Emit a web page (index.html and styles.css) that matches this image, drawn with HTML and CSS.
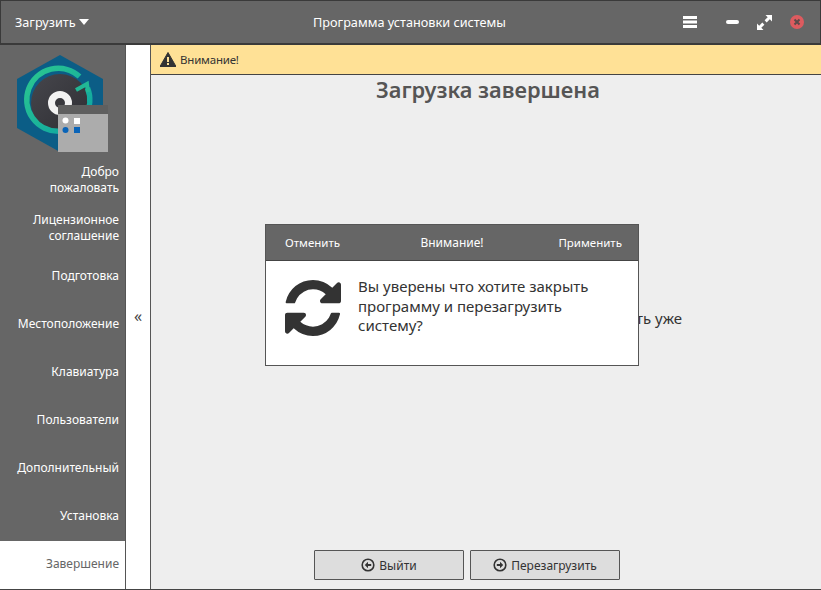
FILE: index.html
```html
<!DOCTYPE html>
<html lang="ru">
<head>
<meta charset="utf-8">
<title>Программа установки системы</title>
<link rel="stylesheet" href="styles.css">
</head>
<body>
<div class="app">
  <header class="titlebar">
    <div class="tb-left">Загрузить <span class="caret"></span></div>
    <div class="tb-title">Программа установки системы</div>
    <div class="tb-right">
      <svg class="ic-menu" width="14" height="12" viewBox="0 0 14 12"><path d="M0 0h14v3H0zM0 4.500h14v3H0zM0 9h14v3H0z" fill="#fff"/></svg>
      <span class="ic-min"></span>
      <svg class="ic-max" width="15" height="15" viewBox="0 0 15 15"><path d="M8.500 0H15v6.500l-2.200-2.200-3.100 3.100-2.100-2.100 3.100-3.100zM6.500 15H0V8.500l2.200 2.200 3.100-3.100 2.100 2.100-3.100 3.100z" fill="#fff"/></svg>
      <svg class="ic-close" width="14" height="14" viewBox="0 0 14 14"><circle cx="7" cy="7" r="7" fill="#dd5b5f"/><path d="M4.500 4.500l5 5M9.500 4.500l-5 5" stroke="#5c4a4a" stroke-width="2"/></svg>
    </div>
  </header>
  <div class="body">
    <aside class="sidebar">
      <svg class="logo" width="92" height="98" viewBox="17 55 92 98">
        <defs>
          <linearGradient id="ring" x1="0" y1="0" x2="1" y2="1"><stop offset="0" stop-color="#2cc78f"/><stop offset="1" stop-color="#0ca3a3"/></linearGradient>
          <linearGradient id="disc" x1="0" y1="0" x2="1" y2="1"><stop offset="0" stop-color="#46464c"/><stop offset="1" stop-color="#2e2e33"/></linearGradient>
        </defs>
        <path d="M60 55l43 24v49l-43 24-43-24V79z" fill="#0b5d86"/>
        <circle cx="60" cy="103" r="29" fill="url(#disc)"/>
        <path d="M79.500 76.500A31.500 31.500 0 1 0 87.500 88" fill="none" stroke="url(#ring)" stroke-width="5.500"/>
        <path d="M76 90l11-6 1 8" fill="none" stroke="#22b795" stroke-width="4"/>
        <circle cx="60" cy="103" r="8.500" fill="#38383d" stroke="#f2f2f2" stroke-width="7"/>
        <rect x="58" y="105" width="50" height="9" fill="#5f5f5f"/>
        <rect x="58" y="114" width="50" height="38" fill="#acacac"/>
        <circle cx="65.500" cy="120.500" r="3" fill="#fff"/>
        <rect x="74" y="118" width="6" height="6" fill="#fff"/>
        <circle cx="65.500" cy="130" r="3" fill="#0a64b8"/>
        <rect x="74" y="127" width="6" height="6" fill="#0a64b8"/>
      </svg>
      <nav class="steps">
        <a class="step">Добро<br>пожаловать</a>
        <a class="step">Лицензионное<br>соглашение</a>
        <a class="step">Подготовка</a>
        <a class="step">Местоположение</a>
        <a class="step">Клавиатура</a>
        <a class="step">Пользователи</a>
        <a class="step">Дополнительный</a>
        <a class="step">Установка</a>
        <a class="step active">Завершение</a>
      </nav>
    </aside>
    <div class="toggle">«</div>
    <main class="main">
      <div class="alert">
        <svg width="16" height="15" viewBox="0 0 16 15"><path d="M8 0.500L16 14.500H0z" fill="#333" stroke="#333" stroke-linejoin="round"/><path d="M7 5h2v5H7zM7 11h2v2H7z" fill="#ffe196"/></svg>
        <span>Внимание!</span>
      </div>
      <h1 class="heading">Загрузка завершена</h1>
      <div class="message"><p>ть уже</p></div>
      <footer class="actions">
        <button class="btn">
          <svg width="14" height="14" viewBox="0 0 14 14"><circle cx="7" cy="7" r="5.800" fill="none" stroke="#333" stroke-width="1.600"/><path d="M7 3.800L3.800 7 7 10.200V8h3.200V6H7z" fill="#333"/></svg>
          Выйти
        </button>
        <button class="btn">
          <svg width="14" height="14" viewBox="0 0 14 14"><circle cx="7" cy="7" r="5.800" fill="none" stroke="#333" stroke-width="1.600"/><path d="M7 3.800L10.200 7 7 10.200V8H3.800V6H7z" fill="#333"/></svg>
          Перезагрузить
        </button>
      </footer>
    </main>
  </div>
  <section class="dialog">
    <div class="dlg-head">
      <span class="dlg-btn">Отменить</span>
      <span class="dlg-title">Внимание!</span>
      <span class="dlg-btn">Применить</span>
    </div>
    <div class="dlg-body">
      <svg class="dlg-icon" width="56" height="56" viewBox="128 128 1536 1536"><path fill="#333" d="M1639 1056q0 5-1 7-64 268-268 434.500t-478 166.500q-146 0-282.500-55t-243.500-157l-129 129q-19 19-45 19t-45-19-19-45v-448q0-26 19-45t45-19h448q26 0 45 19t19 45-19 45l-137 137q71 66 161 102t187 36q134 0 250-65t186-179q11-17 53-117 8-23 30-23h192q13 0 22.500 9.500t9.500 22.500zm25-800v448q0 26-19 45t-45 19h-448q-26 0-45-19t-19-45 19-45l138-138q-148-137-349-137-134 0-250 65t-186 179q-11 17-53 117-8 23-30 23h-199q-13 0-22.500-9.500t-9.500-22.500v-7q65-268 270-434.500t480-166.500q146 0 284 55.500t245 156.500l130-129q19-19 45-19t45 19 19 45z"/></svg>
      <p class="dlg-text">Вы уверены что хотите закрыть<br>программу и перезагрузить<br>систему?</p>
    </div>
  </section>
</div>
</body>
</html>
```
FILE: styles.css
```css
* { box-sizing: border-box; }
html, body { margin: 0; padding: 0; height: 100%; }
body { font-family: "Noto Sans", "Open Sans", sans-serif; color: #333; background: #eee; overflow: hidden; }
.app { position: relative; width: 821px; height: 590px; display: flex; flex-direction: column; }

.titlebar {
  height: 45px; flex: none; background: #666; color: #fff;
  border: 1px solid #3a3a3a; border-bottom-width: 2px;
  display: grid; grid-template-columns: 1fr auto 1fr; align-items: center;
  font-size: 12.7px; padding: 0 16px 0 14px;
}
.tb-left { display: flex; align-items: center; gap: 3px; }
.caret { width: 0; height: 0; border: 5.500px solid transparent; border-top: 6px solid #fff; border-bottom: 0; }
.tb-title { text-align: center; padding-bottom: 1px; }
.tb-right { display: flex; align-items: center; justify-content: flex-end; }
.ic-menu { margin-right: 29px; }
.ic-min { width: 13px; height: 4px; border-radius: 2px; background: #fff; margin-right: 18px; }
.ic-max { margin-right: 18px; }

.body { flex: 1; min-height: 0; display: flex; border-bottom: 1px solid #444; }
.sidebar { width: 126px; flex: none; background: #666; display: flex; flex-direction: column; border-right: 1px solid #555; }
.logo { display: block; margin: 10px 0 0 17px; flex: none; }
.steps { display: flex; flex-direction: column; margin-top: 4px; }
.step {
  height: 48px; display: flex; align-items: center; justify-content: flex-end;
  padding: 0 6px 2px 0; text-align: right; color: #fff; font-size: 12px; line-height: 16px;
}
.step.active { background: #fff; color: #666; }

.toggle { width: 25px; flex: none; background: #fff; border-right: 1px solid #555; display: flex; align-items: center; justify-content: center; font-size: 16px; color: #444; padding-bottom: 2px; }

.main { flex: 1; min-width: 0; display: flex; flex-direction: column; background: #eee; }
.alert {
  height: 30px; flex: none; background: #ffe196; border-bottom: 1px solid #444;
  display: flex; align-items: center; gap: 4px; padding: 0 0 1px 9px; font-size: 11.500px; letter-spacing: -0.2px; color: #333;
}
.heading { margin: 2px 0 0; padding-left: 4px; text-align: center; font-size: 21.800px; line-height: 26px; font-weight: 600; color: #555; }
.message { flex: 1; display: flex; align-items: center; justify-content: flex-end; padding: 0 139px 18px 0; }
.message p { margin: 0; font-size: 15px; white-space: nowrap; color: #333; }
.actions { flex: none; height: 39px; display: flex; justify-content: center; gap: 6px; padding-right: 38px; }
.btn {
  width: 150px; height: 30px; background: #ddd; border: 1px solid #555; border-radius: 1px;
  font: 12px "Noto Sans", sans-serif; color: #333;
  display: flex; align-items: center; justify-content: center; gap: 4px; padding: 0;
}

.dialog { position: absolute; left: 265px; top: 224px; width: 374px; height: 142px; background: #fff; border: 1px solid #555; display: flex; flex-direction: column; }
.dlg-head { height: 36px; flex: none; background: #666; color: #fff; border-bottom: 1px solid #444; display: grid; grid-template-columns: 1fr auto 1fr; align-items: center; padding: 0 16px 1px 19px; font-size: 12px; }
.dlg-btn { font-size: 11.500px; }
.dlg-btn:last-child { text-align: right; }
.dlg-title { padding-right: 3px; }
.dlg-body { flex: 1; display: flex; align-items: flex-start; padding: 19px 0 0 19px; gap: 17px; }
.dlg-icon { flex: none; }
.dlg-text { margin: -3px 0 0; font-size: 15px; line-height: 19.500px; color: #333; }
```
